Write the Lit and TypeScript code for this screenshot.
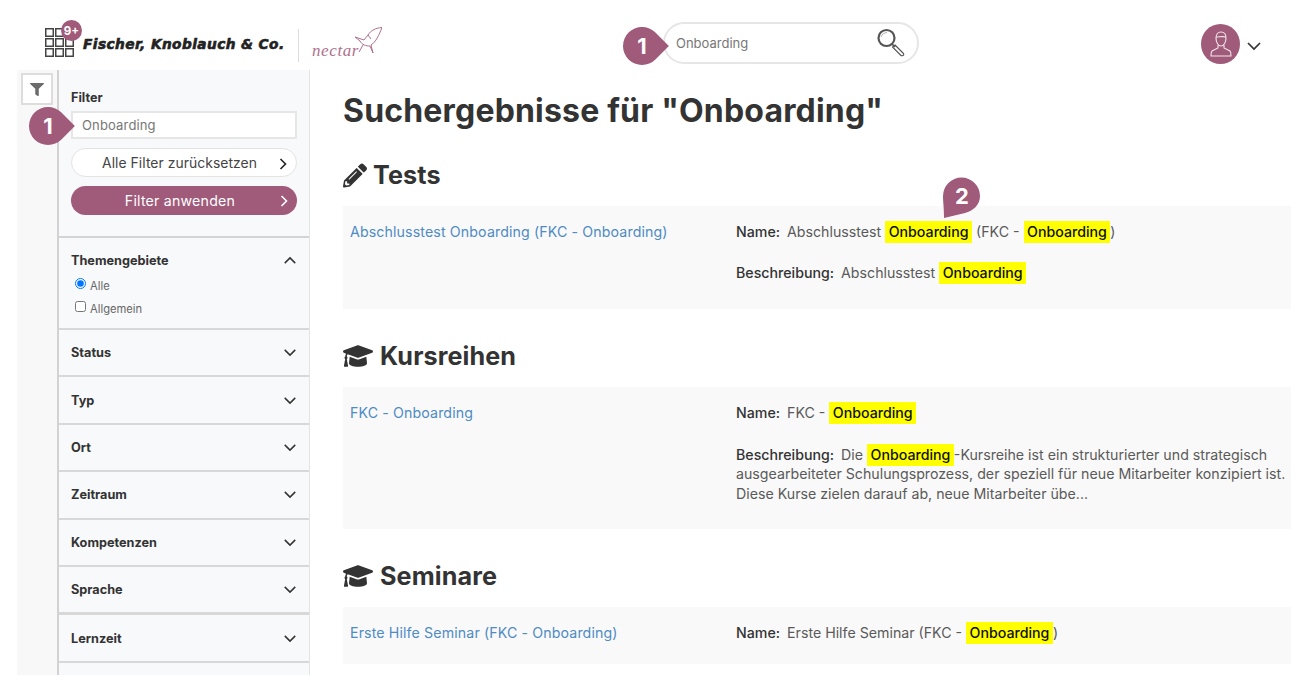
import { LitElement, html, css, svg } from "lit";
import { customElement } from "lit/decorators.js";

const chevDown = html`<svg class="chev" viewBox="0 0 16 10"><path d="M2 2l6 6 6-6" fill="none" stroke="#333" stroke-width="1.7"/></svg>`;
const chevUp = html`<svg class="chev" viewBox="0 0 16 10"><path d="M2 8l6-6 6 6" fill="none" stroke="#333" stroke-width="1.7"/></svg>`;
const pencil = svg`<path d="M497.9 142.1l-46.1 46.1c-4.7 4.7-12.3 4.7-17 0l-111-111c-4.7-4.7-4.7-12.3 0-17l46.1-46.1c18.7-18.7 49.1-18.7 67.9 0l60.1 60.1c18.8 18.7 18.8 49.1 0 67.9zM284.2 99.8L21.6 362.4.4 483.9c-2.9 16.4 11.4 30.6 27.8 27.8l121.5-21.3 262.6-262.6c3.4-3.4 3.4-8.9 0-12.3L296.5 99.8c-3.4-3.4-8.9-3.4-12.3 0zM124.1 339.9c-4.1-4.1-4.1-10.7 0-14.8l154-154c4.1-4.1 10.7-4.1 14.8 0s4.1 10.7 0 14.8l-154 154c-4.1 4.1-10.7 4.1-14.8 0zM88 424h48v36.3l-64.5 11.3-31.1-31.1L51.7 376H88v48z"/>`;
const cap = svg`<path d="M622.34 153.2L343.4 67.5c-15.2-4.67-31.6-4.67-46.79 0L17.66 153.2c-23.54 7.23-23.54 38.36 0 45.59l48.63 14.94c-10.67 13.19-17.23 29.28-17.88 46.9C38.78 266.15 32 276.11 32 288c0 10.78 5.68 19.85 13.86 25.65L20.33 428.53C18.11 438.52 25.71 448 35.94 448h56.11c10.24 0 17.84-9.48 15.62-19.47L82.14 313.65C90.32 307.85 96 298.78 96 288c0-11.57-6.47-21.25-15.66-26.87.76-15.02 8.44-28.3 20.69-36.72L296.6 284.5c9.06 2.78 26.44 6.25 46.79 0l278.95-85.7c23.55-7.24 23.55-38.36 0-45.6zM352.79 315.09c-28.53 8.76-52.84 3.92-65.59 0l-145.02-44.55L128 384c0 35.35 85.96 64 192 64s192-28.65 192-64l-14.18-113.47-145.03 44.56z"/>`;

const mark = (t: string) => html`<mark>${t}</mark>`;
const Q = "Onboarding";

@customElement("app-root")
export class AppRoot extends LitElement {
  static styles = css`
    :host { display: block; width: 1312px; height: 675px; overflow: hidden; position: relative; background: #fff;
      font-family: Inter, "Liberation Sans", sans-serif; color: #333; }
    * { box-sizing: border-box; }
    .top { height: 70px; display: flex; align-items: flex-start; position: relative; }
    .logo { display: flex; align-items: flex-start; margin-left: 45px; margin-top: 28px; width: 618px; position: relative; }
    .grid { width: 29px; height: 29px; flex: none; }
    .badge { position: absolute; left: 16px; top: -8px; width: 21px; height: 21px; border-radius: 50%; background: #a05a7a;
      color: #fff; font-size: 11.5px; font-weight: 700; display: flex; align-items: center; justify-content: center; }
    .brand { font-family: "DejaVu Sans", sans-serif; font-weight: 700; font-style: italic; font-size: 13.7px; line-height: 16px; color: #222;
      margin-left: 9px; margin-top: 8px; white-space: nowrap; width: 215px; -webkit-text-stroke: .6px #222; letter-spacing: .43px; }
    .divider { width: 1px; height: 33px; background: #ddd; margin-top: 1px; }
    .nectar { display: flex; align-items: flex-start; margin-left: 13px; }
    .nectar span { font-family: "Liberation Serif", serif; font-style: italic; font-size: 17px; line-height: 20px; color: #b0708e; letter-spacing: .6px; margin-top: 13px; }
    .nectar svg { width: 30px; height: 27px; margin-left: -7px; margin-top: -1px; }
    .search { width: 256px; height: 42px; margin-top: 22px; border: 2px solid #e6e6e6; border-radius: 21px; display: flex; align-items: center;
      justify-content: space-between; padding: 0 10px 0 11px; font-size: 13px; color: #777; flex: none; }
    .search svg { width: 30px; height: 30px; }
    .user { margin-left: 282px; margin-top: 24px; display: flex; align-items: center; gap: 6px; }
    .avatar { width: 39px; height: 40px; border-radius: 50%; background: #a05a7a; display: flex; align-items: center; justify-content: center; }
    .avatar svg { width: 24px; height: 28px; }
    .user .chev { width: 16px; height: 10px; margin-top: 4px; }

    .body { display: flex; margin-left: 17px; height: 605px; }
    .strip { width: 40px; flex: none; background: #f8f8f8; padding: 3px 4px; }
    .fbtn { width: 32px; height: 32px; border: 2px solid #ddd; background: #fff; display: flex; align-items: center; justify-content: center; }
    .fbtn svg { width: 14px; height: 13px; fill: #6b6b6b; }
    .panel { width: 253px; flex: none; background: #f8f9fb; border-left: 2px solid #d2d2d2; border-right: 1px solid #e4e4e4; }
    .fhead { height: 168px; padding: 21px 12px 0; border-bottom: 2px solid #d4d4d4; display: flex; flex-direction: column; }
    .flabel { font-size: 12.6px; font-weight: 700; line-height: 14px; color: #333; margin-bottom: 6px; }
    .finput { height: 28px; background: #fff; border: 2px solid #e6e6e6; padding: 0 9px; font-size: 13px; line-height: 24px; color: #777; letter-spacing: .15px; }
    .btn { height: 29px; border-radius: 15px; margin-top: 9px; display: flex; align-items: center; justify-content: center; position: relative;
      font-size: 14.2px; padding-right: 8px; }
    .btn svg { position: absolute; right: 9px; top: 9px; width: 8px; height: 12px; }
    .btn.ghost { background: #fff; border: 1px solid #e3e3e3; color: #444; font-size: 13.9px; letter-spacing: 0.05px; padding-right: 9px; }
    .btn.solid { background: #a05a7a; color: #fff; letter-spacing: .2px; }
    .sec { border-bottom: 2px solid #d8d8d8; height: 47.4px; padding: 0 12px; display: flex; align-items: center; justify-content: space-between;
      font-size: 12.7px; font-weight: 700; color: #333; }
    .sec .chev { width: 14px; height: 9px; }
    .sec.open { height: 92px; display: block; padding-top: 14px; }
    .sec.thick { border-bottom-width: 3px; height: 48.4px; }
    .sechead { display: flex; justify-content: space-between; align-items: center; height: 16px; }
    .opt { display: flex; align-items: center; font-size: 11.2px; font-weight: 400; color: #666; height: 23px; margin-left: 4px; }
    .opt:first-of-type { margin-top: 6px; }
    .opt input { margin: 0 4px 0 0; width: 11px; height: 11px; position: relative; top: -2px; }

    .main { flex: 1; padding-left: 33px; padding-right: 21px; }
    h1 { margin: 19px 0 0; font-size: 32px; line-height: 44px; font-weight: 700; color: #333; letter-spacing: .18px; white-space: nowrap; }
    h2 { margin: 0; font-size: 25.2px; line-height: 34px; font-weight: 700; color: #333; display: flex; align-items: center; gap: 7px; letter-spacing: .1px; }
    h2 svg { fill: #333; }
    h2 .ic-pencil { width: 24px; height: 25px; margin-right: -1px; }
    h2 .ic-cap { width: 30px; height: 22px; }
    h2.t1 { margin-top: 25px; }
    h2.t2, h2.t3 { margin-top: 30px; }
    .row { background: #f9f9f9; margin-top: 14px; padding: 16px 0 0 7px; display: grid; grid-template-columns: 386px 1fr; font-size: 14.2px; line-height: 20px; }
    .row a { color: #4f8bc4; letter-spacing: .12px; white-space: nowrap; }
    .val { color: #5a5a5a; white-space: nowrap; }
    .val p { margin: 0 0 21px; }
    .r2 .val p { margin-bottom: 22px; }
    .val b { font-weight: 500; color: #333; margin-right: 3px; }
    .line { display: block; }
    .line.tight { margin-top: -1px; }
    mark { background: #ffff00; color: #111; padding: 2px 3.5px 3px; font-weight: 500; }
    .r1 { height: 103px; } .r2 { height: 142px; } .r3 { height: 57px; }
    .tip { position: absolute; width: 38px; height: 38px; background: #a05a7a; }
    .tip.right { border-radius: 50% 50% 0 50%; transform: rotate(-45deg); }
    .tipn { position: absolute; color: #fff; font-weight: 700; font-size: 22px; line-height: 26px; width: 38px; text-align: center; }
    .tip2 { position: absolute; left: 943px; top: 177px; width: 38px; height: 42px; fill: #a05a7a; }
  `;

  render() {
    const squares = [];
    for (let y = 0; y < 3; y++) for (let x = 0; x < 3; x++)
      squares.push(svg`<rect x=${0.75 + x * 10} y=${0.75 + y * 10} width="7.5" height="7.5" fill="none" stroke="#444" stroke-width="1.5"/>`);
    return html`
      <div class="top">
        <div class="logo">
          <svg class="grid" viewBox="0 0 29 29">${squares}</svg>
          <div class="badge">9+</div>
          <div class="brand">Fischer, Knoblauch &amp; Co.</div>
          <div class="divider"></div>
          <div class="nectar"><span>nectar</span>
            <svg viewBox="0 0 30 27" fill="none" stroke="#b0708e" stroke-width="1" stroke-linejoin="round">
              <path d="M30 .5C24 1 19 3 16 8L12 13 3 10 8 14C10 18 14 19 18 19L21 26 19 18C24 15 27 8 30 .5Z"/>
              <path d="M11 18L7 25"/><path d="M16 8l3 4"/>
            </svg></div>
        </div>
        <div class="search"><span>${Q}</span>
          <svg viewBox="0 0 30 30" fill="none" stroke="#555"><circle cx="9.5" cy="10" r="8" stroke-width="2.2"/><path d="M4 9c1-3 3-4 6-4.5" stroke="#999" stroke-width=".8"/><path d="M15 16l3 3" stroke-width="1.6"/><path d="M18.5 17.5l8 8c1 1 1 2 0 2.5s-1.5.5-2.5-.5l-8-8z" stroke-width="1.1" transform="translate(-.5 -.5)"/></svg>
        </div>
        <div class="user">
          <div class="avatar"><svg viewBox="0 0 24 28" fill="none" stroke="#f3e6ec" stroke-width="1.1">
            <path d="M7 8c0-4 2-6 5-6s5 2 5 6c0 4-2 8-5 8s-5-4-5-8z"/><path d="M7 7c3 0 7-1 10 0"/>
            <path d="M9 15v3l-6 3c-1 1-1 3-1 5h20c0-2 0-4-1-5l-6-3v-3"/></svg></div>
          ${chevDown}
        </div>
      </div>
      <div class="body">
        <div class="strip"><div class="fbtn"><svg viewBox="0 0 512 512" preserveAspectRatio="none"><path d="M487.976 0H24.028C2.71 0-8.047 25.866 7.058 40.971L192 225.941V432c0 7.831 3.821 15.17 10.237 19.662l80 55.98C298.02 518.69 320 507.493 320 487.98V225.941l184.947-184.97C520.021 25.896 509.338 0 487.976 0z"/></svg></div></div>
        <div class="panel">
          <div class="fhead">
            <div class="flabel">Filter</div>
            <div class="finput">${Q}</div>
            <div class="btn ghost">Alle Filter zurücksetzen<svg viewBox="0 0 8 12"><path d="M1.5 1l5 5-5 5" fill="none" stroke="#222" stroke-width="1.6"/></svg></div>
            <div class="btn solid">Filter anwenden<svg viewBox="0 0 8 12"><path d="M1.5 1l5 5-5 5" fill="none" stroke="#fff" stroke-width="1.6"/></svg></div>
          </div>
          <div class="sec open">
            <div class="sechead">Themengebiete ${chevUp}</div>
            <label class="opt"><input type="radio" checked />Alle</label>
            <label class="opt"><input type="checkbox" />Allgemein</label>
          </div>
          ${["Status", "Typ", "Ort", "Zeitraum", "Kompetenzen"].map(s => html`<div class="sec">${s} ${chevDown}</div>`)}
          <div class="sec thick">Sprache ${chevDown}</div>
          <div class="sec">Lernzeit ${chevDown}</div>
        </div>
        <div class="main">
          <h1>Suchergebnisse für "Onboarding"</h1>
          <h2 class="t1"><svg class="ic-pencil" viewBox="0 0 512 512">${pencil}</svg>Tests</h2>
          <div class="row r1"><a>Abschlusstest Onboarding (FKC - Onboarding)</a>
            <div class="val"><p><b>Name:</b> Abschlusstest ${mark(Q)} (FKC - ${mark(Q)})</p>
              <p><b>Beschreibung:</b> Abschlusstest ${mark(Q)}</p></div></div>
          <h2 class="t2"><svg class="ic-cap" viewBox="0 60 640 392" preserveAspectRatio="none">${cap}</svg>Kursreihen</h2>
          <div class="row r2"><a>FKC - Onboarding</a>
            <div class="val"><p><b>Name:</b> FKC - ${mark(Q)}</p>
              <p><span class="line"><b>Beschreibung:</b> Die ${mark(Q)}-Kursreihe ist ein strukturierter und strategisch</span>
              <span class="line tight">ausgearbeiteter Schulungsprozess, der speziell für neue Mitarbeiter konzipiert ist.</span>
              <span class="line">Diese Kurse zielen darauf ab, neue Mitarbeiter übe...</span></p></div></div>
          <h2 class="t3"><svg class="ic-cap" viewBox="0 60 640 392" preserveAspectRatio="none">${cap}</svg>Seminare</h2>
          <div class="row r3"><a>Erste Hilfe Seminar (FKC - Onboarding)</a>
            <div class="val"><p><b>Name:</b> Erste Hilfe Seminar (FKC - ${mark(Q)})</p></div></div>
        </div>
      </div>
      <div class="tip right" style="left:29px;top:107px"></div><div class="tipn" style="left:29px;top:113px">1</div>
      <div class="tip right" style="left:623px;top:27px"></div><div class="tipn" style="left:623px;top:33px">1</div>
      <svg class="tip2" viewBox="0 0 38 42"><path d="M1 41C1 30 0 25 0 19A18.5 18.5 0 1 1 37 19C37 28 30 34 22 36C15 38 8 39 1 41Z"/></svg>
      <div class="tipn" style="left:943px;top:183px">2</div>
    `;
  }
}
